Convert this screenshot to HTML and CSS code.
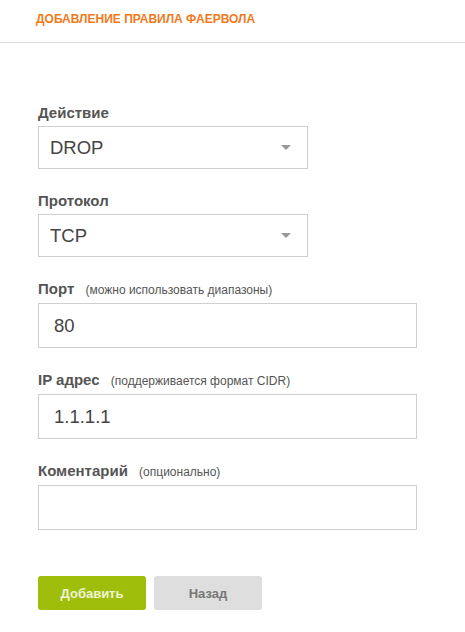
FILE: index.html
```html
<!DOCTYPE html>
<html lang="ru">
<head>
<meta charset="utf-8">
<title>Добавление правила фаервола</title>
<link rel="stylesheet" href="styles.css">
</head>
<body>
<header class="header">
  <h1 class="title">ДОБАВЛЕНИЕ ПРАВИЛА ФАЕРВОЛА</h1>
</header>
<form class="form">
  <div class="field">
    <div class="label">Действие</div>
    <div class="box select"><span class="value">DROP</span><span class="caret"></span></div>
  </div>
  <div class="field">
    <div class="label">Протокол</div>
    <div class="box select"><span class="value">TCP</span><span class="caret"></span></div>
  </div>
  <div class="field">
    <div class="label">Порт <span class="hint">(можно использовать диапазоны)</span></div>
    <div class="box input"><span class="value">80</span></div>
  </div>
  <div class="field">
    <div class="label">IP адрес <span class="hint">(поддерживается формат CIDR)</span></div>
    <div class="box input"><span class="value">1.1.1.1</span></div>
  </div>
  <div class="field">
    <div class="label">Коментарий <span class="hint">(опционально)</span></div>
    <div class="box input"></div>
  </div>
  <div class="actions">
    <button type="button" class="btn btn-primary">Добавить</button>
    <button type="button" class="btn btn-secondary">Назад</button>
  </div>
</form>
</body>
</html>
```
FILE: styles.css
```css
* { box-sizing: border-box; }
html, body { margin: 0; padding: 0; background: #fff; }
body {
  font-family: "Liberation Sans", Arial, sans-serif;
  color: #555;
  width: 465px;
}
.header {
  height: 43px;
  border-bottom: 1px solid #dcdcdc;
  padding: 12px 0 0 36px;
}
.title {
  margin: 0;
  font-size: 12px;
  line-height: 14px;
  font-weight: bold;
  color: #f07a1c;
  letter-spacing: 0;
}
.form {
  padding: 60px 0 0 38px;
}
.field {
  margin-bottom: 22px;
}
.label {
  font-size: 15px;
  font-weight: bold;
  line-height: 20px;
  color: #555;
  margin-bottom: 3px;
}
.hint {
  font-size: 12px;
  font-weight: normal;
  color: #555;
  margin-left: 7px;
}
.box {
  border: 1px solid #cfcfcf;
  background: #fff;
  display: flex;
  align-items: center;
  color: #444;
  font-size: 18.5px;
}
.select {
  width: 270px;
  height: 43px;
  padding: 0 16px 0 11px;
  justify-content: space-between;
}
.input {
  width: 379px;
  height: 45px;
  padding: 0 15px;
}
.caret {
  width: 0;
  height: 0;
  border-left: 5px solid transparent;
  border-right: 5px solid transparent;
  border-top: 5px solid #999;
}
.actions {
  display: flex;
  gap: 8px;
  padding-top: 24px;
}
.btn {
  height: 34px;
  width: 108px;
  border: none;
  border-radius: 3px;
  font-family: "Liberation Sans", Arial, sans-serif;
  font-size: 13px;
  font-weight: bold;
  cursor: pointer;
}
.btn-primary {
  background: #9fbe0c;
  color: #eef4d6;
}
.btn-secondary {
  background: #dedede;
  color: #777;
}
```
